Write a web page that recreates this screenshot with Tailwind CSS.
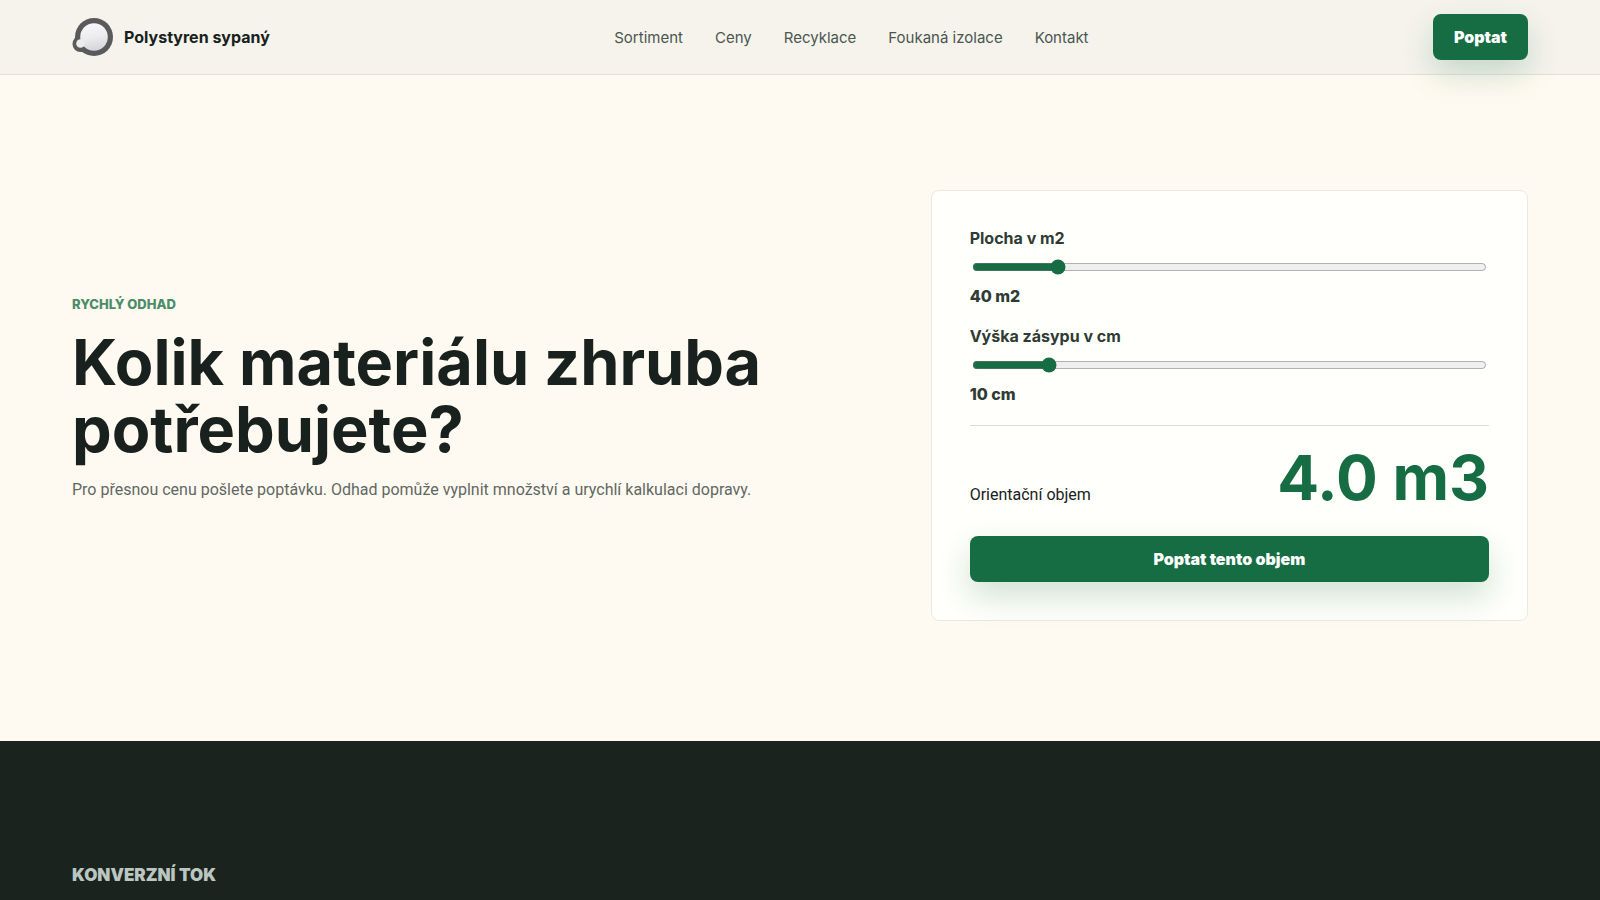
<!DOCTYPE html>
<html lang="cs">
<head>
    <meta charset="UTF-8">
    <meta name="viewport" content="width=device-width, initial-scale=1.0">
    <title>Polystyren sypaný</title>
    <script src="https://cdn.jsdelivr.net/npm/@tailwindcss/browser@4"></script>
    <style>
        body {
            font-family: 'Inter', 'Liberation Sans', sans-serif;
        }
    </style>
</head>
<body class="min-h-screen overflow-x-hidden bg-[#fffaf1] text-[#18211d]">

    <!-- Hlavička -->
    <header class="relative z-10 flex items-center justify-between border-b border-[#e3e1db] bg-[#f5f3ec] px-[72px] py-[14px]">
        <a href="#" class="flex items-center gap-[10px] font-bold">
            <svg class="h-[42px] w-[42px]" viewBox="0 0 42 42" aria-hidden="true">
                <defs>
                    <linearGradient id="ball" x1="0.4" y1="0" x2="0.6" y2="1">
                        <stop offset="0" stop-color="#f8f8fa"/>
                        <stop offset="0.5" stop-color="#ececef"/>
                        <stop offset="1" stop-color="#d3d4d9"/>
                    </linearGradient>
                </defs>
                <g fill="#5a5a5a">
                    <circle cx="22" cy="21" r="19"/>
                    <circle cx="8.500" cy="28" r="8"/>
                    <path d="M3 22 L8 12 L20 36 L9 36 Z"/>
                </g>
                <circle cx="22" cy="21" r="13.800" fill="url(#ball)"/>
                <circle cx="8.500" cy="27.500" r="4.300" fill="#ececee"/>
            </svg>
            <span>Polystyren sypaný</span>
        </a>
        <nav class="flex items-center gap-8 text-[15px] leading-[25px] text-[#4b564f]">
            <a href="#sortiment">Sortiment</a>
            <a href="#ceny">Ceny</a>
            <a href="#recyklace">Recyklace</a>
            <a href="#izolace">Foukaná izolace</a>
            <a href="#kontakt">Kontakt</a>
        </nav>
        <a href="#poptavka" class="flex h-[46px] items-center rounded-lg bg-[#166d43] px-[21px] font-black text-white shadow-[0_14px_32px_rgba(22,109,67,0.2)]">Poptat</a>
    </header>

    <main>
        <!-- Kalkulačka objemu -->
        <section class="grid grid-cols-[5fr_4fr] items-center gap-28 px-[72px] pt-[115px] pb-[120px]">
            <div class="pb-3">
                <p class="text-[13px] leading-4 font-extrabold text-[#4a8d68] uppercase">Rychlý odhad</p>
                <h1 class="mt-[17px] text-[63px] leading-[67px] font-bold">Kolik materiálu zhruba potřebujete?</h1>
                <p class="mt-[13px] font-[Roboto] text-[16px] leading-7 text-[#5f6862]">Pro přesnou cenu pošlete poptávku. Odhad pomůže vyplnit množství a urychlí kalkulaci dopravy.</p>
            </div>

            <form class="rounded-lg border border-[#e9e8e2] bg-[#fffffb] px-[38px] pt-[37px] pb-[38px]">
                <div class="grid gap-[9px] leading-5 font-bold text-[#2f3b35]">
                    <label for="area">Plocha v m2</label>
                    <input type="range" id="area" min="10" max="200" value="40" class="m-[2px] h-4 accent-[#166d43]">
                    <output id="area-value" for="area" class="font-extrabold">40 m2</output>
                </div>
                <div class="mt-5 grid gap-[9px] leading-5 font-bold text-[#2f3b35]">
                    <label for="height">Výška zásypu v cm</label>
                    <input type="range" id="height" min="2" max="60" value="10" class="m-[2px] h-4 accent-[#166d43]">
                    <output id="height-value" for="height" class="font-extrabold">10 cm</output>
                </div>
                <div class="mt-[21px] flex items-end justify-between border-t border-[#dcddd8] pt-5">
                    <span class="font-[Roboto] leading-[30px]">Orientační objem</span>
                    <output id="volume" for="area height" class="text-[62px] leading-[64px] font-bold text-[#166d43]">4.0 m3</output>
                </div>
                <button type="button" class="mt-[26px] h-[46px] w-full rounded-lg bg-[#166d43] font-black text-white shadow-[0_14px_32px_rgba(22,109,67,0.2)]">Poptat tento objem</button>
            </form>
        </section>

        <section class="bg-[#1a231e] px-[72px] py-[120px]">
            <h2 class="text-[17px] leading-7 font-black text-[#bcc6c1] uppercase">Konverzní tok</h2>
        </section>
    </main>

    <script>
        const area = document.getElementById('area');
        const height = document.getElementById('height');

        // Přepočet objemu: plocha (m2) x výška (cm)
        function updateVolume() {
            document.getElementById('area-value').textContent = area.value + ' m2';
            document.getElementById('height-value').textContent = height.value + ' cm';
            document.getElementById('volume').textContent = (area.value * height.value / 100).toFixed(1) + ' m3';
        }

        area.addEventListener('input', updateVolume);
        height.addEventListener('input', updateVolume);
    </script>

</body>
</html>
